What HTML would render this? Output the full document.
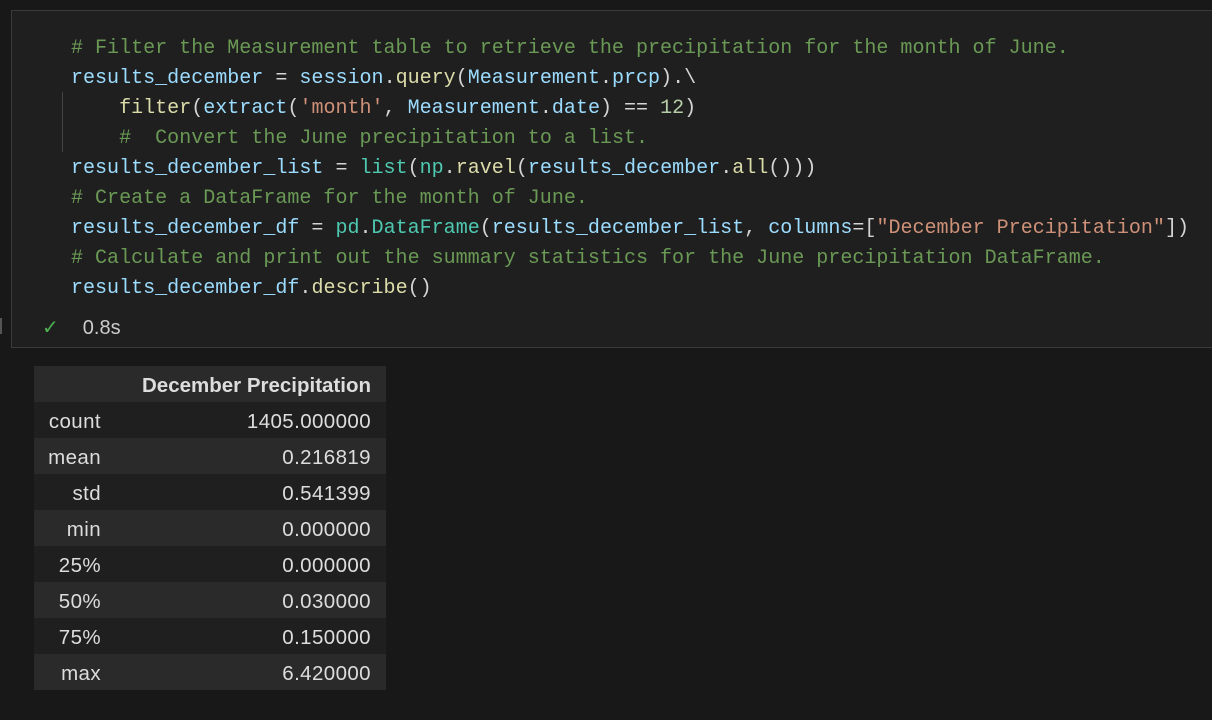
<!DOCTYPE html>
<html><head><meta charset="utf-8"><style>
html,body{margin:0;padding:0;background:#181818;width:1212px;height:720px;overflow:hidden}
.cell{position:absolute;left:11px;top:10px;width:1210px;height:338px;background:#1f1f1f;border:1px solid #3a3a3a;box-sizing:border-box}
.code{position:absolute;left:71px;top:34px;font-family:"Liberation Mono",monospace;font-size:20.05px;line-height:30px;color:#d4d4d4;white-space:pre}
.c{color:#6a9955}.v{color:#9cdcfe}.f{color:#dcdcaa}.s{color:#ce9178}.t{color:#4ec9b0}.n{color:#b5cea8}
.guide{position:absolute;left:62px;top:92px;width:1px;height:60px;background:#444}
.status{position:absolute;left:42px;top:315px;font-family:"Liberation Sans",sans-serif;font-size:20px;color:#ccc}
.chk{color:#4caf50;margin-right:24px;font-size:20px}
.lbar{position:absolute;left:0;top:318px;width:2px;height:16px;background:#555}
table{position:absolute;left:34px;top:366px;border-collapse:collapse;font-family:"Liberation Sans",sans-serif;font-size:20.5px;letter-spacing:.4px;color:#ddd}
td,th{height:33px;padding:3px 0 0 0;text-align:right}
th{font-weight:bold;letter-spacing:0}
td.i,th.i{width:67px}td.x,th.x{width:270px;padding-right:15px}
tr:nth-child(odd){background:#2a2a2a}
tr:nth-child(even){background:#1f1f1f}
</style></head><body>
<div class="cell"></div>
<div class="lbar"></div>
<div class="guide"></div>
<div class="code"><span class="c"># Filter the Measurement table to retrieve the precipitation for the month of June.</span>
<span class="v">results_december</span> = <span class="v">session</span>.<span class="f">query</span>(<span class="v">Measurement</span>.<span class="v">prcp</span>).\
    <span class="f">filter</span>(<span class="v">extract</span>(<span class="s">'month'</span>, <span class="v">Measurement</span>.<span class="v">date</span>) == <span class="n">12</span>)
    <span class="c">#  Convert the June precipitation to a list.</span>
<span class="v">results_december_list</span> = <span class="t">list</span>(<span class="t">np</span>.<span class="f">ravel</span>(<span class="v">results_december</span>.<span class="f">all</span>()))
<span class="c"># Create a DataFrame for the month of June.</span>
<span class="v">results_december_df</span> = <span class="t">pd</span>.<span class="t">DataFrame</span>(<span class="v">results_december_list</span>, <span class="v">columns</span>=[<span class="s">"December Precipitation"</span>])
<span class="c"># Calculate and print out the summary statistics for the June precipitation DataFrame.</span>
<span class="v">results_december_df</span>.<span class="f">describe</span>()</div>
<div class="status"><span class="chk">✓</span>0.8s</div>
<table>
<tr><th class="i"></th><th class="x">December Precipitation</th></tr>
<tr><td class="i">count</td><td class="x">1405.000000</td></tr>
<tr><td class="i">mean</td><td class="x">0.216819</td></tr>
<tr><td class="i">std</td><td class="x">0.541399</td></tr>
<tr><td class="i">min</td><td class="x">0.000000</td></tr>
<tr><td class="i">25%</td><td class="x">0.000000</td></tr>
<tr><td class="i">50%</td><td class="x">0.030000</td></tr>
<tr><td class="i">75%</td><td class="x">0.150000</td></tr>
<tr><td class="i">max</td><td class="x">6.420000</td></tr>
</table>
</body></html>
